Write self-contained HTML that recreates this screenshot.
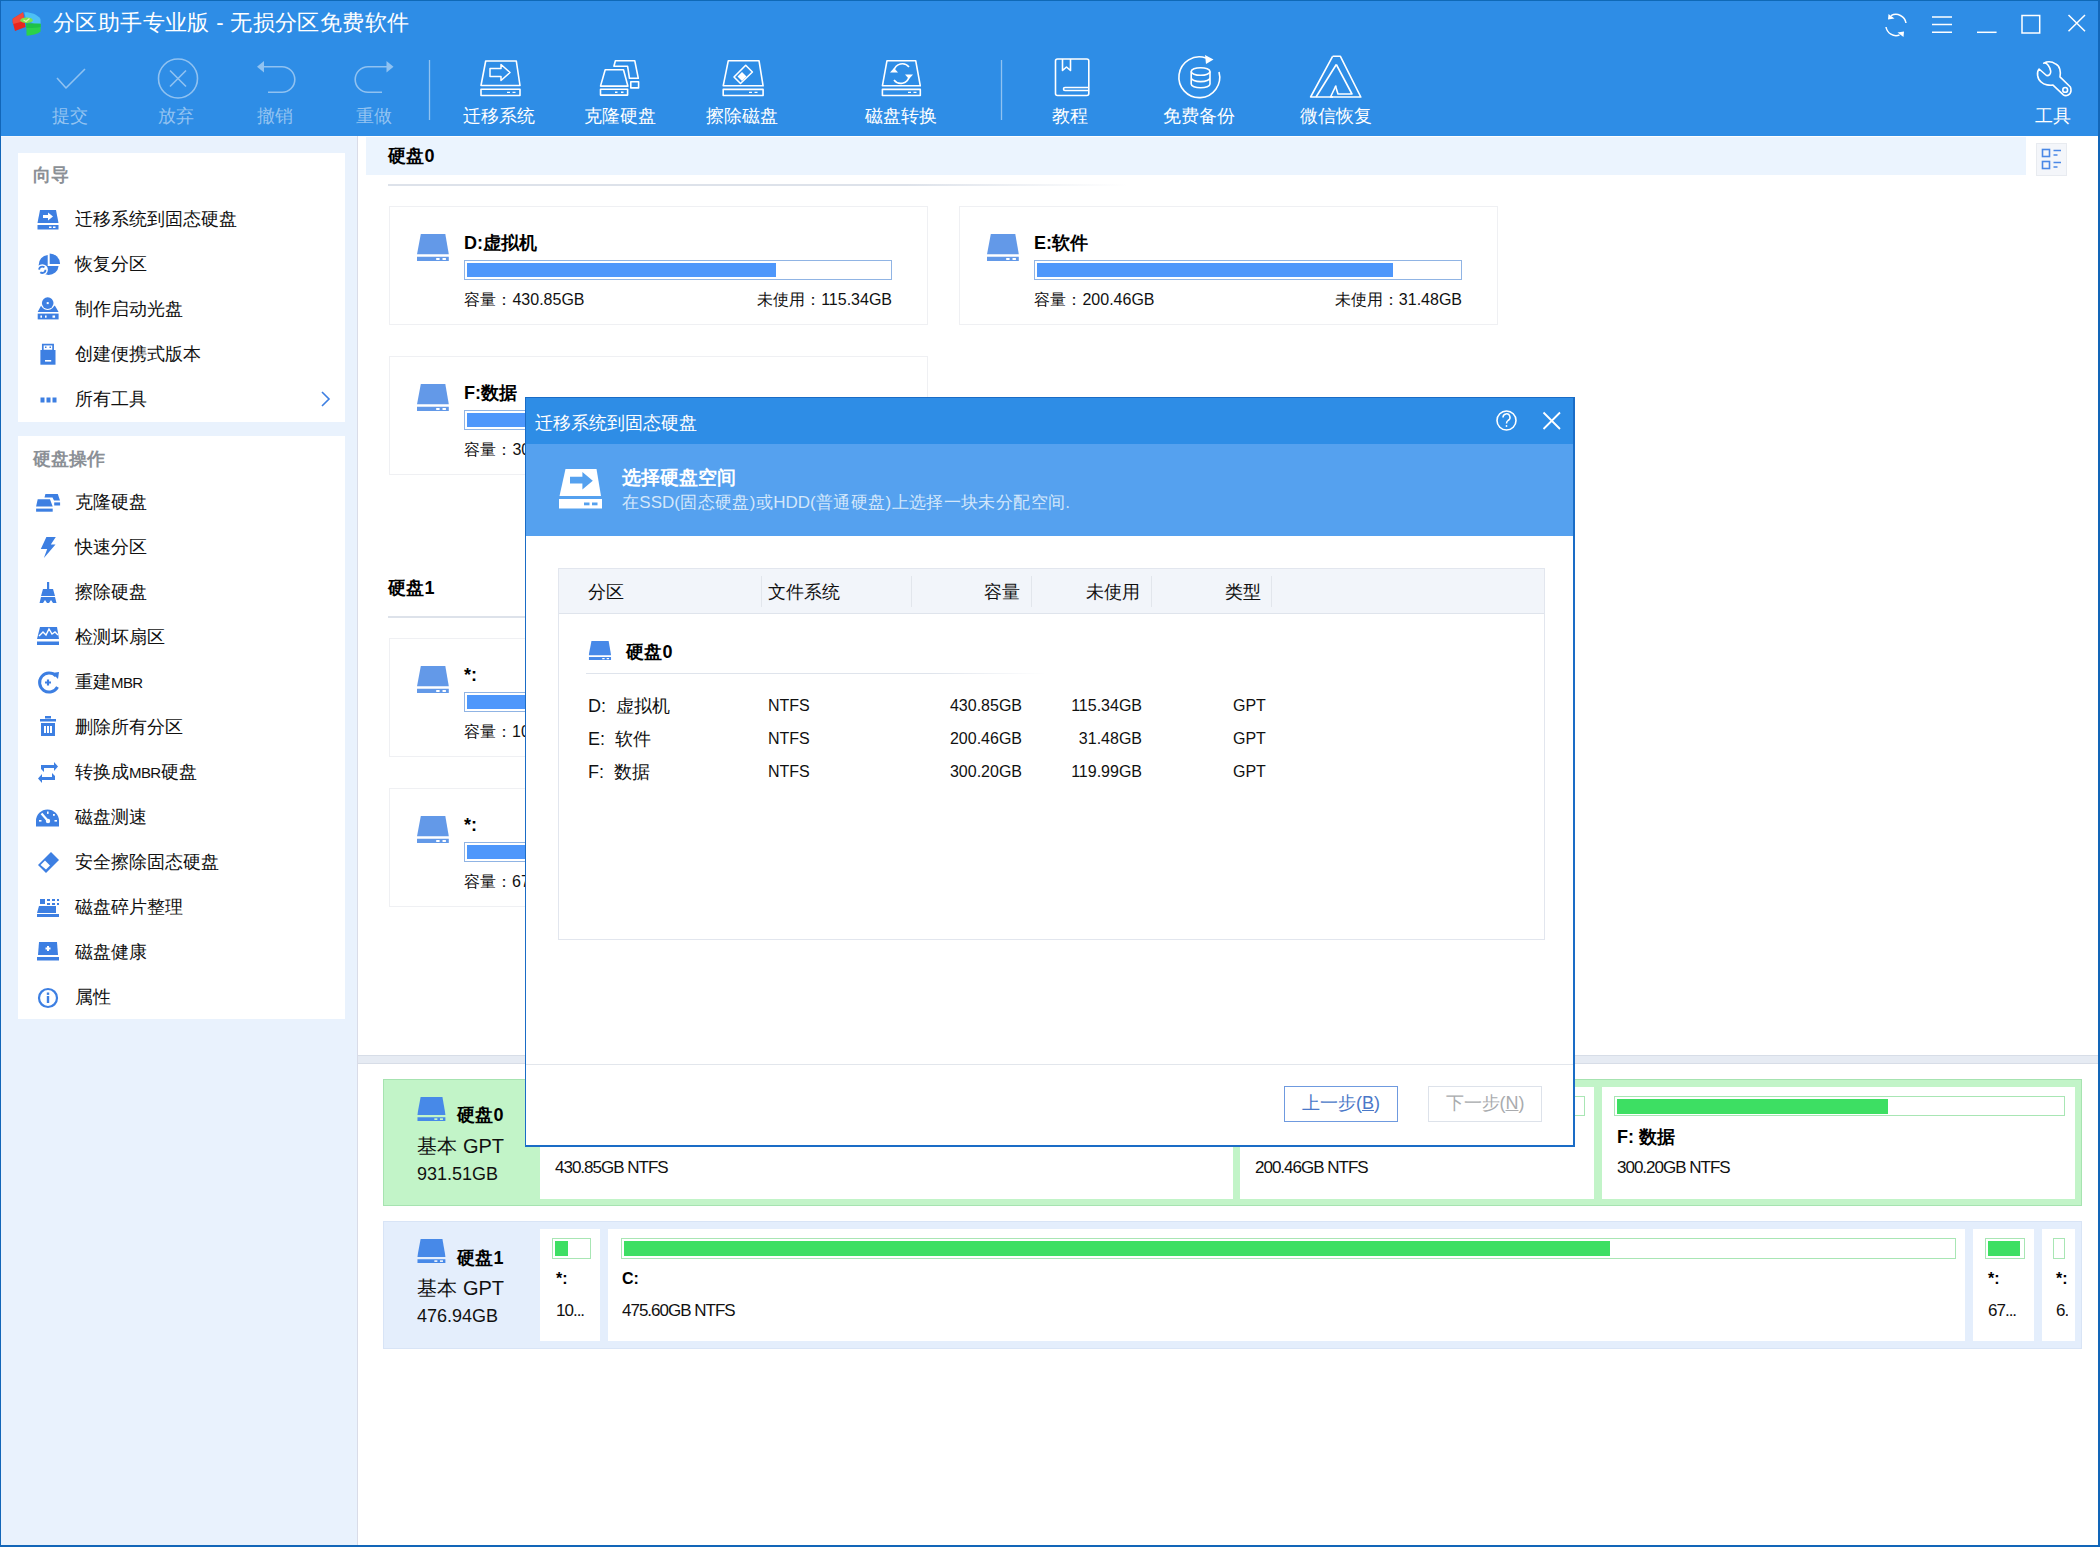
<!DOCTYPE html>
<html><head><meta charset="utf-8">
<style>
*{box-sizing:border-box;margin:0;padding:0}
html,body{width:2100px;height:1547px;overflow:hidden;background:#fff;font-family:"Liberation Sans",sans-serif;color:#000}
.a{position:absolute;white-space:nowrap}
svg.a{overflow:visible}
.tt{color:#fff;font-size:22px;line-height:24px}
.tl{color:#fff;font-size:18px;line-height:18px}
.dis{color:#93c3f1}
.j{text-align:justify;text-align-last:justify}
.li{font-size:18px;line-height:18px;color:#111}
.hd{font-size:18px;line-height:18px;color:#8b9096;font-weight:bold}
.b18{font-size:18px;line-height:18px;font-weight:bold}
.t16{font-size:16px;line-height:16px;color:#111}
.t17{font-size:17px;line-height:17px;color:#111;letter-spacing:-1px}
</style></head><body>
<svg width="0" height="0" style="position:absolute">
<defs>
<symbol id="drv" viewBox="0 0 32 27"><path d="M3.8 0H28.3L31.8 20.3H0Z"/><path d="M0 22.8H31.8V27.1H0ZM19.2 24V26H22.6V24ZM25.5 24V26H28.9V24Z" fill-rule="evenodd"/></symbol>
</defs></svg>

<!-- ===== TITLE + TOOLBAR ===== -->
<div class="a" style="left:0;top:0;width:2100px;height:136px;background:#2e8de6;border-top:1px solid #1b6fc4;border-left:1px solid #1b6fc4;border-right:2px solid #1b6fc4"></div>
<svg class="a" style="left:-8px;top:0" width="58" height="45">
 <path d="M20.7 18.8L31 12.3L33.5 27L23 31.1L20.7 22.3Z" fill="#e8261e"/><path d="M20.7 18.8L31 12.3L32.5 21L21 24Z" fill="#f24a3a"/>
 <path d="M32.3 12.3C38 12 45 14 48.5 19L48.6 24H42L34 19.5Z" fill="#4cc0f5"/>
 <path d="M34.2 23.5L48.6 23.7V31.6C46 34 40 35.5 34.6 35.8Z" fill="#2bd24a"/><path d="M34.2 23.5L48.6 23.7V27C44 28 38 28.2 34.3 28Z" fill="#1ec247"/>
 <ellipse cx="34.6" cy="20.2" rx="6.3" ry="2.8" fill="#7ee24a"/><path d="M31.5 20L34 21.5L37.5 18.5" stroke="#d8f5b0" stroke-width="1.2" fill="none"/>
</svg>
<div class="a j tt" style="left:53px;top:11px;width:356px">分区助手专业版 - 无损分区免费软件</div>

<!-- window controls -->
<svg class="a" style="left:0;top:0" width="2100" height="136" fill="none" stroke="#fff" stroke-width="1.5">
 <path d="M1891 15.7A10.2 10.2 0 0 1 1906 23"/><path d="M1886 27A10.2 10.2 0 0 0 1899.5 35"/>
 <path d="M1888.5 14L1894.5 18.5L1888 19.5Z" fill="#fff" stroke="none"/><path d="M1903.5 37L1897.5 32.5L1904 31.5Z" fill="#fff" stroke="none"/>
 <path d="M1932 17H1952M1932 24.6H1952M1932 32.3H1952"/>
 <path d="M1977 32.3H1996.6"/>
 <rect x="2022" y="15.5" width="17.7" height="17.5"/>
 <path d="M2068.5 15L2085 31.3M2085 15L2068.5 31.3"/>
</svg>

<!-- toolbar icons -->
<svg class="a" style="left:0;top:0" width="2100" height="136" fill="none" stroke-width="1.6" stroke-linejoin="round">
 <g stroke="#90c2f1">
  <path d="M57 78L66 88L85 69"/>
  <circle cx="178" cy="78.5" r="19.5"/><path d="M170 70.5L186 86.5M186 70.5L170 86.5"/>
  <path d="M262 66.7H282A12.8 12.8 0 0 1 282 92.3H268"/><path d="M257 66.7L264 61V72.5Z" fill="#90c2f1" stroke="none"/>
  <path d="M388 66.7H368A12.8 12.8 0 0 0 368 92.3H382"/><path d="M393.5 66.7L386.5 61V72.5Z" fill="#90c2f1" stroke="none"/>
  <path d="M429.5 60V120" stroke-width="1.3"/>
  <path d="M1001.5 60V120" stroke-width="1.3"/>
 </g>
 <g stroke="#fff">
  <!-- migrate -->
  <path d="M485.7 61H516.3L520 85.5H481Z"/><rect x="481" y="89.3" width="39" height="6.2"/><path d="M507 92.4H510M512.5 92.4H515.5" stroke-width="1.4"/>
  <path d="M490 68.5H501V64.5L510 72.5L501 80.5V76.5H490Z" stroke-width="1.5"/>
  <!-- clone -->
  <path d="M613.9 66.3L615.4 60.8H634.8L638.3 78.3H629.5L627.6 66.3Z"/>
  <path d="M605.2 69.8H623.5L627.9 86.1H600.5Z"/><rect x="600.5" y="89.3" width="27.1" height="5.8"/><path d="M615 92.3H617.5M621 92.3H623.5" stroke-width="1.4"/>
  <rect x="630.8" y="81.8" width="7.8" height="6.1"/>
  <!-- erase -->
  <path d="M728.3 60.7H759L763.1 85.8H723.2Z"/><rect x="723.2" y="89.4" width="39.9" height="6.1"/><path d="M749 92.4H752M754.5 92.4H757.5" stroke-width="1.4"/>
  <path d="M734 77L745.7 65.3L752.4 72L740.5 83.5Z"/><path d="M737.5 76.5L742 72L746.5 76.5L742 81Z" fill="#fff" stroke="none"/>
  <!-- convert -->
  <path d="M887 60.7H915.7L920.3 85.8H882.4Z"/><rect x="882.4" y="89.4" width="37.9" height="6.1"/><path d="M908 92.4H911M913.5 92.4H916.5" stroke-width="1.4"/>
  <path d="M894 70.5A8.5 8.5 0 0 1 909 67"/><path d="M909 77A8.5 8.5 0 0 1 894 80"/>
  <path d="M890 72.5H898L894 68Z" fill="#fff" stroke="none"/><path d="M905 74.5H913L909 79Z" fill="#fff" stroke="none"/>
  <!-- book -->
  <rect x="1055.5" y="59" width="33.3" height="36.5" rx="2"/><path d="M1062.5 59V70.5L1066.5 67L1070.5 70.5V59"/><path d="M1088.8 87.5H1065A1.5 1.5 0 0 0 1065 90.5H1088.8"/>
  <!-- backup -->
  <path d="M1206 58A20.4 20.4 0 1 0 1219 72"/><path d="M1205 55L1213.5 59.5L1206 64Z" fill="#fff" stroke="none"/>
  <ellipse cx="1200.6" cy="71.5" rx="9.4" ry="3.8"/><path d="M1191.2 71.5V84A9.4 3.8 0 0 0 1210 84V71.5M1191.2 77.8A9.4 3.8 0 0 0 1210 77.8"/>
  <!-- wechat recovery -->
  <path d="M1332.6 56.3H1340.4L1360.8 97H1330.5L1336 85.5"/><path d="M1333 97H1310.6L1332.6 56.3"/><path d="M1336.3 64.5L1316 97"/><path d="M1336.3 64.5L1352 94H1338L1335.5 86"/>
  <!-- wrench -->
  <path d="M2043.7 63.2C2047 62 2050 67 2050.7 71.1C2051 74 2049 76 2046.5 75.5L2039.1 69C2036.5 72 2037 79 2041.5 82.3C2044 85 2050 85.5 2053 85.1L2063.4 94.8C2066 97 2071 94.5 2071 90.5C2071 88.5 2070.4 87 2070.4 87L2060 76.9C2061 72 2060 66 2055.8 64.1C2052 61.5 2047 61.5 2043.7 63.2Z"/><circle cx="2065.2" cy="89.9" r="2.4"/>
 </g>
</svg>
<div class="a j tl dis" style="left:52px;top:107px;width:36.0px">提交</div>
<div class="a j tl dis" style="left:158px;top:107px;width:36.0px">放弃</div>
<div class="a j tl dis" style="left:257px;top:107px;width:36.0px">撤销</div>
<div class="a j tl dis" style="left:356px;top:107px;width:36.0px">重做</div>
<div class="a j tl" style="left:463px;top:107px;width:72.0px">迁移系统</div>
<div class="a j tl" style="left:584px;top:107px;width:72.0px">克隆硬盘</div>
<div class="a j tl" style="left:706px;top:107px;width:72.0px">擦除磁盘</div>
<div class="a j tl" style="left:865px;top:107px;width:72.0px">磁盘转换</div>
<div class="a j tl" style="left:1052px;top:107px;width:36.0px">教程</div>
<div class="a j tl" style="left:1163px;top:107px;width:72.0px">免费备份</div>
<div class="a j tl" style="left:1300px;top:107px;width:72.0px">微信恢复</div>
<div class="a j tl" style="left:2035px;top:107px;width:36.0px">工具</div>

<!-- ===== LEFT PANEL ===== -->
<div class="a" style="left:0;top:136px;width:358px;height:1411px;background:#e9f2fd;border-left:1px solid #1b6fc4;border-right:1px solid #d9dce8;border-bottom:2px solid #1b6fc4"></div>
<div class="a" style="left:0;top:136px;width:357px;height:1px;background:#f4f8fe"></div>
<div class="a" style="left:18px;top:153px;width:327px;height:269px;background:#fff"></div>
<div class="a" style="left:18px;top:436px;width:327px;height:583px;background:#fff"></div>
<div class="a j hd" style="left:33px;top:166px;width:36.0px">向导</div>
<div class="a j li" style="left:75px;top:210px;width:162.0px">迁移系统到固态硬盘</div>
<div class="a j li" style="left:75px;top:255px;width:72.0px">恢复分区</div>
<div class="a j li" style="left:75px;top:300px;width:108.0px">制作启动光盘</div>
<div class="a j li" style="left:75px;top:345px;width:126.0px">创建便携式版本</div>
<div class="a j li" style="left:75px;top:390px;width:72.0px">所有工具</div>
<div class="a j hd" style="left:33px;top:450px;width:72.0px">硬盘操作</div>
<div class="a j li" style="left:75px;top:493px;width:72.0px">克隆硬盘</div>
<div class="a j li" style="left:75px;top:538px;width:72.0px">快速分区</div>
<div class="a j li" style="left:75px;top:583px;width:72.0px">擦除硬盘</div>
<div class="a j li" style="left:75px;top:628px;width:90.0px">检测坏扇区</div>
<div class="a j li" style="left:75px;top:673px;width:67px">重建<span style="font-size:15px;letter-spacing:-0.6px">MBR</span></div>
<div class="a j li" style="left:75px;top:718px;width:108.0px">删除所有分区</div>
<div class="a j li" style="left:75px;top:763px;width:121px">转换成<span style="font-size:15px;letter-spacing:-0.6px">MBR</span>硬盘</div>
<div class="a j li" style="left:75px;top:808px;width:72.0px">磁盘测速</div>
<div class="a j li" style="left:75px;top:853px;width:144.0px">安全擦除固态硬盘</div>
<div class="a j li" style="left:75px;top:898px;width:108.0px">磁盘碎片整理</div>
<div class="a j li" style="left:75px;top:943px;width:72.0px">磁盘健康</div>
<div class="a j li" style="left:75px;top:988px;width:36.0px">属性</div>
<svg class="a" style="left:0;top:0" width="358" height="1040" fill="#3d7fe2">
 <!-- migrate -->
 <path d="M40 210H56L58.5 223H37.5Z"/><rect x="37.5" y="225" width="21" height="4.5"/>
 <path d="M43 215H48V212.5L53 216.5L48 220.5V218H43Z" fill="#fff"/><rect x="49" y="226.5" width="2.5" height="1.5" fill="#fff"/><rect x="53" y="226.5" width="2.5" height="1.5" fill="#fff"/>
 <!-- recover pie -->
 <path d="M49.7 253.5A10.5 10.5 0 0 1 60.1 264H49.7Z"/><path d="M47.7 255A10 10 0 1 0 58.6 265.9H47.7Z"/>
 <circle cx="42.3" cy="269.8" r="5.6" fill="#fff"/><circle cx="42.3" cy="269.8" r="3.2" fill="none" stroke="#3d7fe2" stroke-width="1.8" stroke-dasharray="7 3"/>
 <!-- boot disc -->
 <path d="M41 305.8H55L58.6 312H37.7Z"/><circle cx="47.7" cy="303.1" r="7" fill="#fff"/><circle cx="47.7" cy="303.1" r="5.8"/><rect x="46.7" y="302.1" width="2" height="2" fill="#fff"/>
 <rect x="37.7" y="313.6" width="20.9" height="5.8"/><rect x="40.4" y="315.5" width="1.6" height="2.2" fill="#fff"/><rect x="45" y="315.5" width="1.6" height="2.2" fill="#fff"/><rect x="52.5" y="315.5" width="2.6" height="2.2" fill="#fff"/>
 <!-- usb -->
 <rect x="42.8" y="344.6" width="10.3" height="6" fill="none" stroke="#3d7fe2" stroke-width="1.7"/><rect x="45" y="346.5" width="1.5" height="1.5"/><rect x="49.5" y="346.5" width="1.5" height="1.5"/>
 <rect x="40.4" y="350" width="15.1" height="14.7"/><rect x="45" y="360" width="6.2" height="1.6" fill="#fff"/>
 <!-- dots -->
 <rect x="40.5" y="397.5" width="4" height="5"/><rect x="46.5" y="397.5" width="4" height="5"/><rect x="52.5" y="397.5" width="4" height="5"/>
 <path d="M322 392L329 399L322 406" fill="none" stroke="#3d7fe2" stroke-width="1.6"/>
 <!-- clone -->
 <path d="M45.4 494H57.8L60 500.5H54L52.5 497.5H44.5Z"/><rect x="54.2" y="502.4" width="5.9" height="3.1"/><path d="M37.7 499.3H50L52.7 506.6H36.1Z"/><rect x="36.1" y="508.6" width="16.6" height="3.1"/>
 <!-- lightning -->
 <path d="M46.4 537H55.8L50.8 544.5H55.5L43.9 558L47.2 549H40.8Z"/>
 <!-- broom -->
 <rect x="47" y="582" width="2.2" height="7"/><path d="M43 589H53L55 596H41Z"/><path d="M41 597H55L56.5 603H53L51 600L49 603H47L45 600L43 603H39.5Z"/>
 <!-- bad sector -->
 <path d="M40 627H57L59 639H37Z"/><path d="M39 636L43 632L46 635L49 629L52 634L55 632L58 635" fill="none" stroke="#fff" stroke-width="1.4"/><rect x="37" y="641.5" width="22" height="3.5"/>
 <!-- rebuild mbr -->
 <path d="M56 676A9.5 9.5 0 1 0 57.5 687" fill="none" stroke="#3d7fe2" stroke-width="3"/><path d="M52 673L59 672L58 679Z"/><path d="M45 682.5H51M48 679.5V685.5" stroke="#3d7fe2" stroke-width="2.2"/>
 <!-- trash -->
 <rect x="40" y="719" width="16" height="2.5"/><rect x="45" y="716" width="6" height="2.5"/><path d="M41 723H55V736H41ZM44 726V733H46V726ZM47 726V733H49V726ZM50 726V733H52V726Z" fill-rule="evenodd"/>
 <!-- convert -->
 <path d="M41 769V765H54V762L58 766.5L54 771V768H44V772Z"/><path d="M55 776V780H42V783L38 778.5L42 774V777H52V773Z"/>
 <!-- speed -->
 <path d="M36 826.4V821A11.5 11.5 0 0 1 59 821V826.4Z"/><path d="M48 821L41.5 813.5" stroke="#fff" stroke-width="2.2"/><circle cx="48" cy="821" r="2.2" fill="#fff"/>
 <rect x="39" y="820" width="2.5" height="1.6" fill="#fff"/><rect x="54.5" y="820" width="2.5" height="1.6" fill="#fff"/><rect x="47" y="811.5" width="1.6" height="2.4" fill="#fff"/><rect x="53" y="814" width="1.8" height="1.8" fill="#fff"/>
 <!-- eraser -->
 <path d="M51 852L59 860L46 873L38 865Z"/><path d="M40.5 865L45 860.5L50 865.5L46 869.5Z" fill="#fff"/>
 <!-- defrag -->
 <path d="M40 899H45V904H40ZM47 899H50V901H47ZM52 899H55V901H52ZM57 899H59V901H57ZM47 903H50V905H47ZM52 903H55V905H52ZM57 903H59V905H57Z"/><path d="M39 906H56V913H37Z"/><rect x="37" y="914" width="22" height="3"/>
 <!-- health -->
 <path d="M39 942H57L58 955H38Z"/><rect x="37" y="957" width="22" height="3.5"/><path d="M45.5 948.5H50.5M48 946V951" stroke="#fff" stroke-width="2"/>
 <!-- info -->
 <circle cx="48" cy="998" r="9" fill="none" stroke="#3d7fe2" stroke-width="2.2"/><rect x="46.8" y="996" width="2.4" height="7"/><rect x="46.8" y="992.5" width="2.4" height="2.4"/>
</svg>

<!-- ===== MAIN AREA ===== -->
<div class="a" style="left:366px;top:137px;width:1660px;height:38px;background:#ebf4fe"></div>
<div class="a j b18" style="left:388px;top:147px;width:46.5px">硬盘0</div>
<div class="a" style="left:388px;top:184px;width:740px;height:2px;background:linear-gradient(90deg,#dde2ea 0,#dde2ea 70%,#fff 100%)"></div>
<div class="a" style="left:2036px;top:143px;width:31px;height:33px;background:#f4f6fa;border:1px solid #e8ebf0"></div>
<svg class="a" style="left:0;top:0" width="2100" height="200" fill="none" stroke="#4a88e6" stroke-width="1.6">
 <rect x="2042.5" y="149.5" width="7" height="7"/><rect x="2042.5" y="161.5" width="7" height="7"/>
 <path d="M2053.5 150.5H2061M2053.5 155H2057.5M2053.5 162.5H2061M2053.5 167H2057.5"/>
</svg>

<!-- partition cards -->
<div class="a" style="left:389px;top:206px;width:539px;height:119px;border:1px solid #eff0f3"></div>
<div class="a" style="left:959px;top:206px;width:539px;height:119px;border:1px solid #eff0f3"></div>
<div class="a" style="left:389px;top:356px;width:539px;height:119px;border:1px solid #eff0f3"></div>
<div class="a" style="left:389px;top:638px;width:539px;height:119px;border:1px solid #eff0f3"></div>
<div class="a" style="left:389px;top:788px;width:539px;height:119px;border:1px solid #eff0f3"></div>

<svg class="a" style="left:417px;top:234px;fill:#6399e8" width="32" height="27"><use href="#drv"/></svg>
<svg class="a" style="left:987px;top:234px;fill:#6399e8" width="32" height="27"><use href="#drv"/></svg>
<svg class="a" style="left:417px;top:384px;fill:#6399e8" width="32" height="27"><use href="#drv"/></svg>
<svg class="a" style="left:417px;top:666px;fill:#6399e8" width="32" height="27"><use href="#drv"/></svg>
<svg class="a" style="left:417px;top:816px;fill:#6399e8" width="32" height="27"><use href="#drv"/></svg>

<div class="a j b18" style="left:464px;top:234px;width:73.0px">D:虚拟机</div>
<div class="a" style="left:464px;top:260px;width:428px;height:20px;border:1px solid #90b4e4;background:#fff"><div style="position:absolute;left:2px;top:2px;width:309px;height:14px;background:#4e97fb"></div></div>
<div class="a j t16" style="left:464px;top:292px;width:120.5px">容量：430.85GB</div>
<div class="a j t16" style="right:1208px;top:292px;width:135.0px">未使用：115.34GB</div>

<div class="a j b18" style="left:1034px;top:234px;width:54.0px">E:软件</div>
<div class="a" style="left:1034px;top:260px;width:428px;height:20px;border:1px solid #90b4e4;background:#fff"><div style="position:absolute;left:2px;top:2px;width:356px;height:14px;background:#4e97fb"></div></div>
<div class="a j t16" style="left:1034px;top:292px;width:120.5px">容量：200.46GB</div>
<div class="a j t16" style="right:638px;top:292px;width:127.5px">未使用：31.48GB</div>

<div class="a j b18" style="left:464px;top:384px;width:53.0px">F:数据</div>
<div class="a" style="left:464px;top:410px;width:428px;height:20px;border:1px solid #90b4e4;background:#fff"><div style="position:absolute;left:2px;top:2px;width:249px;height:14px;background:#4e97fb"></div></div>
<div class="a j t16" style="left:464px;top:442px;width:120.5px">容量：300.20GB</div>

<div class="a j b18" style="left:388px;top:579px;width:46.5px">硬盘1</div>
<div class="a" style="left:388px;top:616px;width:740px;height:2px;background:linear-gradient(90deg,#dde2ea 0,#dde2ea 70%,#fff 100%)"></div>

<div class="a b18" style="left:464px;top:666px">*:</div>
<div class="a" style="left:464px;top:692px;width:428px;height:20px;border:1px solid #90b4e4;background:#fff"><div style="position:absolute;left:2px;top:2px;width:299px;height:14px;background:#4e97fb"></div></div>
<div class="a j t16" style="left:464px;top:724px;width:121.0px">容量：100.00MB</div>
<div class="a b18" style="left:464px;top:816px">*:</div>
<div class="a" style="left:464px;top:842px;width:428px;height:20px;border:1px solid #90b4e4;background:#fff"><div style="position:absolute;left:2px;top:2px;width:299px;height:14px;background:#4e97fb"></div></div>
<div class="a j t16" style="left:464px;top:874px;width:121.0px">容量：671.00MB</div>

<!-- divider -->
<div class="a" style="left:358px;top:1055px;width:1740px;height:9px;background:#e6ebf3;border-top:1px solid #d7dde7;border-bottom:1px solid #d7dde7"></div>

<!-- disk map row 0 -->
<div class="a" style="left:383px;top:1079px;width:1699px;height:127px;background:#c2f4c8;border:1px solid #a6e3b0"></div>
<div class="a" style="left:540px;top:1087px;width:693px;height:112px;background:#fff"></div>
<div class="a" style="left:1240px;top:1087px;width:354px;height:112px;background:#fff"></div>
<div class="a" style="left:1602px;top:1087px;width:473px;height:112px;background:#fff"></div>
<svg class="a" style="left:417px;top:1097px;fill:#4789e8" width="29" height="24" viewBox="0 0 32 27"><use href="#drv"/></svg>
<div class="a j b18" style="left:457px;top:1106px;width:46.5px">硬盘0</div>
<div class="a j" style="left:417px;top:1136px;font-size:20px;line-height:20px;color:#111;width:87.0px">基本 GPT</div>
<div class="a" style="left:417px;top:1165px;font-size:18px;line-height:18px;color:#111">931.51GB</div>

<div class="a" style="left:555px;top:1096px;width:668px;height:20px;border:1px solid #a8e6b4;background:#fff"><div style="position:absolute;left:2px;top:2px;width:600px;height:15px;background:#3ddf63"></div></div>
<div class="a t17" style="left:555px;top:1159px">430.85GB NTFS</div>
<div class="a" style="left:1255px;top:1096px;width:330px;height:20px;border:1px solid #a8e6b4;background:#fff"><div style="position:absolute;left:2px;top:2px;width:280px;height:15px;background:#3ddf63"></div></div>
<div class="a j b18" style="left:1255px;top:1128px;width:59.5px">E: 软件</div>
<div class="a t17" style="left:1255px;top:1159px">200.46GB NTFS</div>
<div class="a" style="left:1614px;top:1096px;width:451px;height:20px;border:1px solid #a8e6b4;background:#fff"><div style="position:absolute;left:2px;top:2px;width:271px;height:15px;background:#3ddf63"></div></div>
<div class="a j b18" style="left:1617px;top:1128px;width:58.0px">F: 数据</div>
<div class="a t17" style="left:1617px;top:1159px">300.20GB NTFS</div>

<!-- disk map row 1 -->
<div class="a" style="left:383px;top:1221px;width:1699px;height:128px;background:#e4eefc;border:1px solid #d8e4f6"></div>
<div class="a" style="left:540px;top:1229px;width:60px;height:112px;background:#fff"></div>
<div class="a" style="left:608px;top:1229px;width:1357px;height:112px;background:#fff"></div>
<div class="a" style="left:1973px;top:1229px;width:61px;height:112px;background:#fff"></div>
<div class="a" style="left:2042px;top:1229px;width:33px;height:112px;background:#fff"></div>
<svg class="a" style="left:417px;top:1239px;fill:#4789e8" width="29" height="24" viewBox="0 0 32 27"><use href="#drv"/></svg>
<div class="a j b18" style="left:457px;top:1249px;width:46.5px">硬盘1</div>
<div class="a j" style="left:417px;top:1278px;font-size:20px;line-height:20px;color:#111;width:87.0px">基本 GPT</div>
<div class="a" style="left:417px;top:1307px;font-size:18px;line-height:18px;color:#111">476.94GB</div>

<div class="a" style="left:552px;top:1238px;width:39px;height:21px;border:1px solid #a8e6b4;background:#fff"><div style="position:absolute;left:2px;top:2px;width:13px;height:15px;background:#3ddf63"></div></div>
<div class="a b18" style="left:556px;top:1270px;font-size:16px">*:</div>
<div class="a t17" style="left:556px;top:1302px">10...</div>
<div class="a" style="left:621px;top:1238px;width:1335px;height:21px;border:1px solid #a8e6b4;background:#fff"><div style="position:absolute;left:2px;top:2px;width:986px;height:15px;background:#3ddf63"></div></div>
<div class="a b18" style="left:622px;top:1270px;font-size:16px">C:</div>
<div class="a t17" style="left:622px;top:1302px">475.60GB NTFS</div>
<div class="a" style="left:1985px;top:1238px;width:40px;height:21px;border:1px solid #a8e6b4;background:#fff"><div style="position:absolute;left:2px;top:2px;width:32px;height:15px;background:#3ddf63"></div></div>
<div class="a b18" style="left:1988px;top:1270px;font-size:16px">*:</div>
<div class="a t17" style="left:1988px;top:1302px">67...</div>
<div class="a" style="left:2053px;top:1238px;width:12px;height:21px;border:1px solid #a8e6b4;background:#fff"></div>
<div class="a" style="left:2042px;top:1229px;width:26px;height:112px;overflow:hidden"><div class="a b18" style="left:14px;top:41px;font-size:16px">*:</div><div class="a t17" style="left:14px;top:73px">6...</div></div>

<!-- ===== DIALOG ===== -->
<div class="a" style="left:525px;top:397px;width:1050px;height:750px;background:#fff;border:1px solid #1a6cc6;border-bottom:2px solid #1a6cc6;border-right:2px solid #1a6cc6"></div>
<div class="a" style="left:526px;top:398px;width:1047px;height:46px;background:#2e8de6"></div>
<div class="a" style="left:526px;top:444px;width:1047px;height:92px;background:#55a1ef"></div>
<div class="a j" style="left:535px;top:414px;font-size:18px;line-height:18px;color:#fff;width:162.0px">迁移系统到固态硬盘</div>
<svg class="a" style="left:0;top:0" width="1600" height="560" fill="none" stroke="#fff" stroke-width="1.6">
 <circle cx="1506.5" cy="420.5" r="9.5"/>
 <path d="M1503 417.5A3.5 3.5 0 1 1 1508 420.5C1506.5 421.5 1506.5 422 1506.5 423.5" stroke-width="1.5"/><circle cx="1506.5" cy="426" r="0.9" fill="#fff" stroke="none"/>
 <path d="M1543.5 412.5L1560 429M1560 412.5L1543.5 429" stroke-width="1.8"/>
</svg>
<svg class="a" style="left:559px;top:469px" width="44" height="40" viewBox="0 0 44 40">
 <path d="M6.5 0H37.5L42 27H0.5Z" fill="#fff"/><path d="M11 7.8H23.4V2.9L33.8 11.7L23.4 20.5V14.6H11Z" fill="#55a1ef"/>
 <path d="M0 30H43V39.5H0Z" fill="#fff"/><rect x="25" y="33.5" width="5.5" height="2.8" fill="#55a1ef"/><rect x="33" y="33.5" width="5.5" height="2.8" fill="#55a1ef"/>
</svg>
<div class="a j" style="left:622px;top:468px;font-size:19px;line-height:19px;color:#fff;font-weight:bold;width:114.0px">选择硬盘空间</div>
<div class="a j" style="left:622px;top:494px;font-size:17px;line-height:17px;color:#d3e7fb;width:448px">在SSD(固态硬盘)或HDD(普通硬盘)上选择一块未分配空间.</div>

<!-- table -->
<div class="a" style="left:558px;top:568px;width:987px;height:372px;border:1px solid #e2e6ee;background:#fff"></div>
<div class="a" style="left:559px;top:569px;width:985px;height:45px;background:#f2f5fa;border-bottom:1px solid #dfe4ec"></div>
<div class="a" style="left:761px;top:576px;width:1px;height:31px;background:#e2e6ec"></div>
<div class="a" style="left:911px;top:576px;width:1px;height:31px;background:#e2e6ec"></div>
<div class="a" style="left:1031px;top:576px;width:1px;height:31px;background:#e2e6ec"></div>
<div class="a" style="left:1151px;top:576px;width:1px;height:31px;background:#e2e6ec"></div>
<div class="a" style="left:1271px;top:576px;width:1px;height:31px;background:#e2e6ec"></div>
<div class="a j li" style="left:588px;top:583px;width:36.0px">分区</div>
<div class="a j li" style="left:768px;top:583px;width:72.0px">文件系统</div>
<div class="a j li" style="right:1080px;top:583px;width:36.0px">容量</div>
<div class="a j li" style="right:960px;top:583px;width:54.0px">未使用</div>
<div class="a j li" style="left:1225px;top:583px;width:36.0px">类型</div>

<svg class="a" style="left:588px;top:641px;fill:#4789e8" width="24" height="19" viewBox="0 0 32 27"><use href="#drv"/></svg>
<div class="a j b18" style="left:626px;top:643px;width:46.5px">硬盘0</div>
<div class="a" style="left:586px;top:673px;width:460px;height:1px;background:linear-gradient(90deg,#dfe4ec 0,#dfe4ec 75%,#fff 100%)"></div>

<div class="a j li" style="left:588px;top:697px;width:82.5px">D:&nbsp;&nbsp;虚拟机</div>
<div class="a j li" style="left:588px;top:730px;width:63.5px">E:&nbsp;&nbsp;软件</div>
<div class="a j li" style="left:588px;top:763px;width:62.0px">F:&nbsp;&nbsp;数据</div>
<div class="a t16" style="left:768px;top:698px">NTFS</div>
<div class="a t16" style="left:768px;top:731px">NTFS</div>
<div class="a t16" style="left:768px;top:764px">NTFS</div>
<div class="a t16" style="right:1078px;top:698px">430.85GB</div>
<div class="a t16" style="right:1078px;top:731px">200.46GB</div>
<div class="a t16" style="right:1078px;top:764px">300.20GB</div>
<div class="a t16" style="right:958px;top:698px">115.34GB</div>
<div class="a t16" style="right:958px;top:731px">31.48GB</div>
<div class="a t16" style="right:958px;top:764px">119.99GB</div>
<div class="a t16" style="left:1233px;top:698px">GPT</div>
<div class="a t16" style="left:1233px;top:731px">GPT</div>
<div class="a t16" style="left:1233px;top:764px">GPT</div>

<!-- footer -->
<div class="a" style="left:526px;top:1064px;width:1047px;height:1px;background:#e2e6ec"></div>
<div class="a" style="left:1284px;top:1086px;width:114px;height:36px;border:1.5px solid #6f9adf;color:#4a78c8;font-size:18px;line-height:33px;text-align:center">上一步(<u>B</u>)</div>
<div class="a" style="left:1428px;top:1086px;width:114px;height:36px;border:1.5px solid #dde2ea;color:#a9abae;font-size:18px;line-height:33px;text-align:center">下一步(<u>N</u>)</div>
<!-- window frame -->
<div class="a" style="left:0;top:0;width:2100px;height:1547px;border-top:1px solid #0f69b6;border-left:1px solid #1266b8;border-right:2px solid #1266b8;border-bottom:2px solid #1266b8"></div>
</body></html>
